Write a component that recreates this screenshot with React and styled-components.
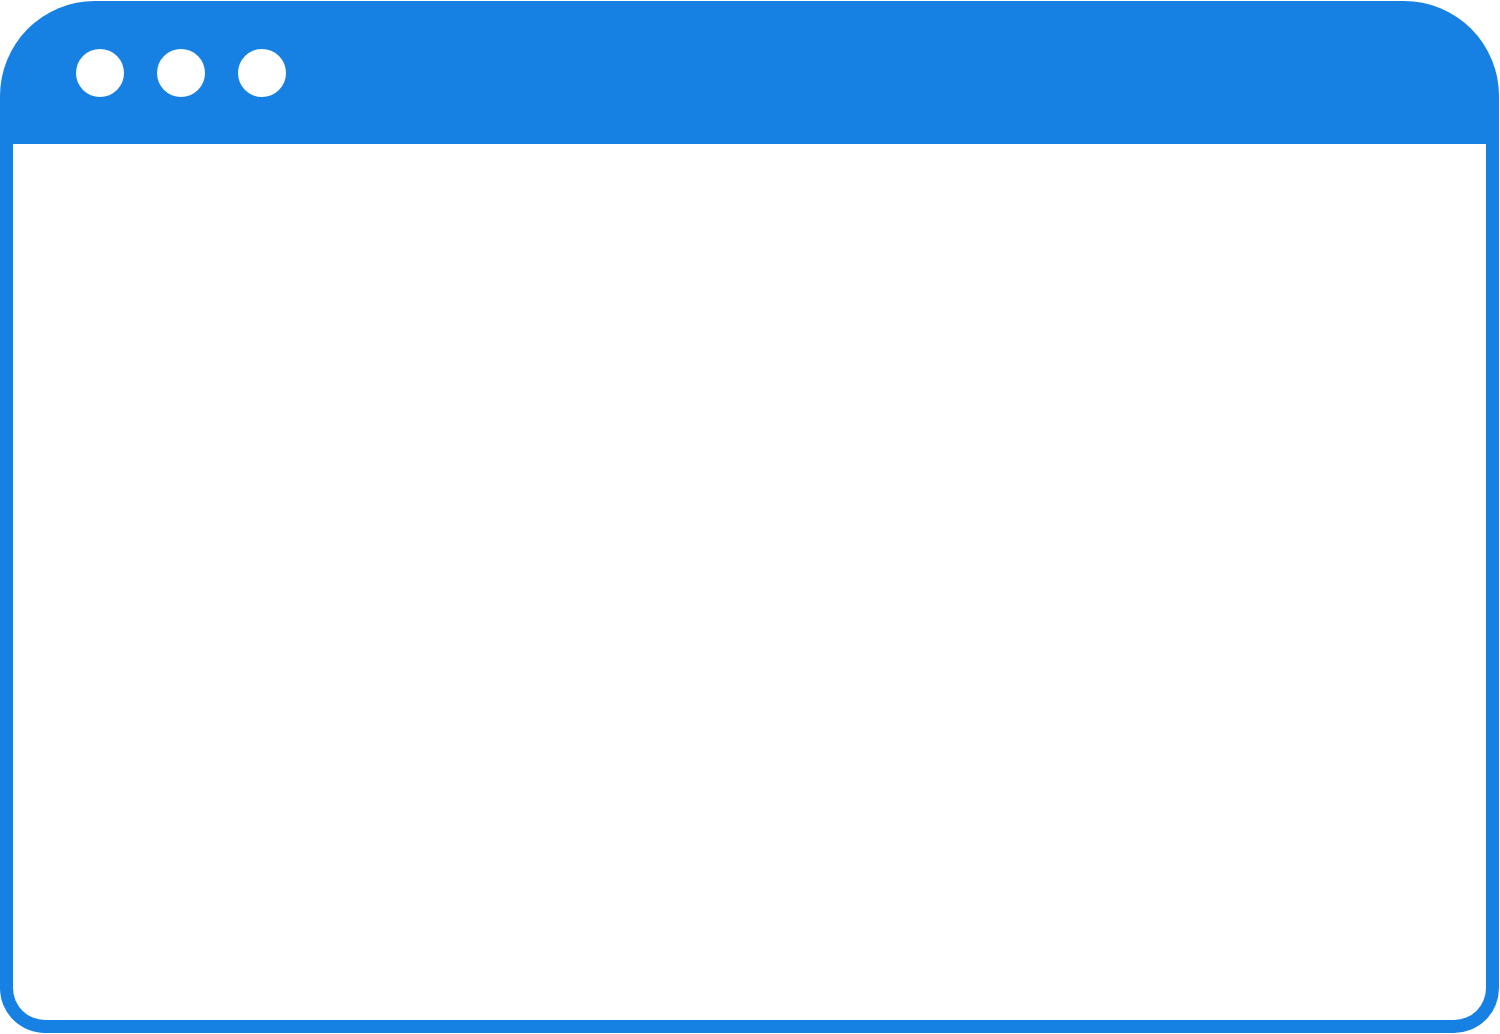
import React from "react";
import styled, { createGlobalStyle } from "styled-components";

const Global = createGlobalStyle`
  html, body { margin: 0; padding: 0; background: #ffffff; }
  body { font-family: "Liberation Sans", Arial, sans-serif; }
`;

const Page = styled.div`
  width: 1500px;
  height: 1034px;
  padding-top: 1px;
  box-sizing: border-box;
`;

const Window = styled.div`
  width: 1499px;
  height: 1032px;
  background: #1780e3;
  border-radius: 95px 95px 45px 45px;
  display: flex;
  flex-direction: column;
  overflow: hidden;
`;

const TitleBar = styled.div`
  height: 143px;
  flex: none;
  display: flex;
  align-items: center;
  gap: 33px;
  padding-left: 76px;
`;

const Dot = styled.span`
  width: 48px;
  height: 48px;
  border-radius: 50%;
  background: #ffffff;
`;

const Viewport = styled.div`
  flex: 1;
  margin: 0 13px 13px;
  background: #ffffff;
  border-radius: 0 0 32px 32px;
`;

export default function App() {
  return (
    <Page>
      <Global />
      <Window>
        <TitleBar>
          <Dot />
          <Dot />
          <Dot />
        </TitleBar>
        <Viewport />
      </Window>
    </Page>
  );
}
